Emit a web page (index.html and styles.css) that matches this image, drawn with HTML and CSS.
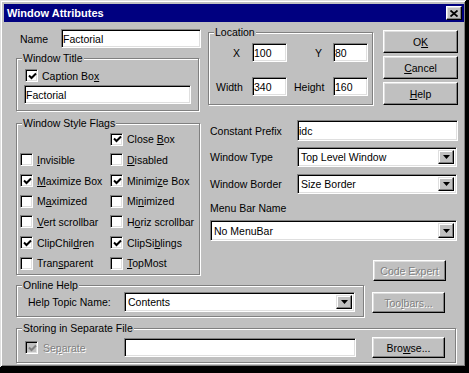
FILE: index.html
```html
<!DOCTYPE html>
<html lang="en">

<head>
    <meta charset="UTF-8">
    <meta name="viewport" content="width=device-width, initial-scale=1.0">
    <title>Window Attributes</title>
    <link rel="stylesheet" href="styles.css">
</head>

<body>
    <div class="dialog">
        <div class="titlebar">
            <span class="title">Window Attributes</span>
            <span class="close">
                <svg width="8" height="7" viewBox="0 0 8 7"><path d="M0.5 0.5L7.5 6.5M7.5 0.5L0.5 6.5" stroke="#000" stroke-width="1.8" fill="none"/></svg>
            </span>
        </div>

        <div class="content">
            <div class="top">
                <div class="col-left">
                    <div class="name-row">
                        <span class="name-label">Name</span>
                        <input class="edit name-edit" type="text" value="Factorial" readonly>
                    </div>

                    <div class="group title-group">
                        <span class="legend">Window Title</span>
                        <div class="check-row caption-row">
                            <span class="check on"><svg width="9" height="9" viewBox="0 0 9 9"><path d="M1 3.5L3.5 6L8 1.5" stroke="#000" stroke-width="2" fill="none"/></svg></span>
                            <span>Caption Bo<u>x</u></span>
                        </div>
                        <input class="edit title-edit" type="text" value="Factorial" readonly>
                    </div>

                    <div class="group flags-group">
                        <span class="legend">Window Style Flags</span>
                        <div class="flags">
                            <span></span>
                            <div class="check-row"><span class="check on"><svg width="9" height="9" viewBox="0 0 9 9"><path d="M1 3.5L3.5 6L8 1.5" stroke="#000" stroke-width="2" fill="none"/></svg></span><span>Close <u>B</u>ox</span></div>
                            <div class="check-row"><span class="check"></span><span><u>I</u>nvisible</span></div>
                            <div class="check-row"><span class="check"></span><span><u>D</u>isabled</span></div>
                            <div class="check-row"><span class="check on"><svg width="9" height="9" viewBox="0 0 9 9"><path d="M1 3.5L3.5 6L8 1.5" stroke="#000" stroke-width="2" fill="none"/></svg></span><span><u>M</u>aximize Box</span></div>
                            <div class="check-row"><span class="check on"><svg width="9" height="9" viewBox="0 0 9 9"><path d="M1 3.5L3.5 6L8 1.5" stroke="#000" stroke-width="2" fill="none"/></svg></span><span>Minimi<u>z</u>e Box</span></div>
                            <div class="check-row"><span class="check"></span><span>M<u>a</u>ximized</span></div>
                            <div class="check-row"><span class="check"></span><span>Mi<u>n</u>imized</span></div>
                            <div class="check-row"><span class="check"></span><span><u>V</u>ert scrollbar</span></div>
                            <div class="check-row"><span class="check"></span><span>H<u>o</u>riz scrollbar</span></div>
                            <div class="check-row"><span class="check on"><svg width="9" height="9" viewBox="0 0 9 9"><path d="M1 3.5L3.5 6L8 1.5" stroke="#000" stroke-width="2" fill="none"/></svg></span><span>ClipChil<u>d</u>ren</span></div>
                            <div class="check-row"><span class="check on"><svg width="9" height="9" viewBox="0 0 9 9"><path d="M1 3.5L3.5 6L8 1.5" stroke="#000" stroke-width="2" fill="none"/></svg></span><span>ClipSi<u>b</u>lings</span></div>
                            <div class="check-row"><span class="check"></span><span>Tran<u>s</u>parent</span></div>
                            <div class="check-row"><span class="check"></span><span><u>T</u>opMost</span></div>
                        </div>
                    </div>
                </div>

                <div class="col-right">
                    <div class="loc-row">
                        <div class="group location">
                            <span class="legend">Location</span>
                            <div class="loc-grid">
                                <span class="lbl-x">X</span>
                                <input class="edit" type="text" value="100" readonly>
                                <span class="lbl-y">Y</span>
                                <input class="edit" type="text" value="80" readonly>
                                <span class="lbl-w">Width</span>
                                <input class="edit" type="text" value="340" readonly>
                                <span class="lbl-h">Height</span>
                                <input class="edit" type="text" value="160" readonly>
                            </div>
                        </div>
                        <div class="btn-stack">
                            <button class="btn">O<u>K</u></button>
                            <button class="btn"><u>C</u>ancel</button>
                            <button class="btn"><u>H</u>elp</button>
                        </div>
                    </div>

                    <div class="field-row cp-row">
                        <span class="field-label">Constant Prefix</span>
                        <input class="edit field-edit" type="text" value="idc" readonly>
                    </div>
                    <div class="field-row wt-row">
                        <span class="field-label">Window Type</span>
                        <div class="combo field-combo"><span class="combo-text">Top Level Window</span><span class="drop"><svg width="7" height="4" viewBox="0 0 7 4"><path d="M0 0H7L3.5 4Z"/></svg></span></div>
                    </div>
                    <div class="field-row wb-row">
                        <span class="field-label">Window Border</span>
                        <div class="combo field-combo"><span class="combo-text">Size Border</span><span class="drop"><svg width="7" height="4" viewBox="0 0 7 4"><path d="M0 0H7L3.5 4Z"/></svg></span></div>
                    </div>
                    <div class="menu-label">Menu Bar Name</div>
                    <div class="combo menu-combo"><span class="combo-text">No MenuBar</span><span class="drop"><svg width="7" height="4" viewBox="0 0 7 4"><path d="M0 0H7L3.5 4Z"/></svg></span></div>
                    <button class="btn small code-btn" disabled>Code Expert</button>
                </div>
            </div>

            <div class="help-row">
                <div class="group help-group">
                    <span class="legend">Online Help</span>
                    <div class="help-line">
                        <span class="help-label">Help Topic Name:</span>
                        <div class="combo help-combo"><span class="combo-text">Contents</span><span class="drop"><svg width="7" height="4" viewBox="0 0 7 4"><path d="M0 0H7L3.5 4Z"/></svg></span></div>
                    </div>
                </div>
                <button class="btn small toolbars-btn" disabled>Too<u>l</u>bars...</button>
            </div>

            <div class="group store-group">
                <span class="legend">Storing in Separate File</span>
                <div class="store-line">
                    <div class="check-row sep-check disabled">
                        <span class="check on"><svg width="9" height="9" viewBox="0 0 9 9"><path d="M1 3.5L3.5 6L8 1.5" stroke="#808080" stroke-width="2" fill="none"/></svg></span>
                        <span>Se<u>p</u>arate</span>
                    </div>
                    <input class="edit store-edit" type="text" value="" readonly>
                    <button class="btn small browse-btn">Bro<u>w</u>se...</button>
                </div>
            </div>
        </div>
    </div>
</body>

</html>
```

FILE: styles.css
```css
* {
    box-sizing: border-box;
}

body {
    margin: 0;
    background: #000;
    font-family: "Liberation Sans", Arial, sans-serif;
    font-size: 10.5px;
    color: #000;
}

.dialog {
    width: 466px;
    height: 367px;
    padding: 4px 0 0 4px;
    background: #c0c0c0;
    box-shadow: inset 1px 1px 0 #dfdfdf, inset -1px -1px 0 #000, inset 2px 2px 0 #fff, inset -2px -2px 0 #808080;
}

.titlebar {
    display: flex;
    align-items: center;
    justify-content: space-between;
    width: 460px;
    height: 18px;
    padding: 0 2px 0 3px;
    background: #000080;
}

.title {
    color: #fff;
    font-weight: bold;
    font-size: 11px;
}

.close {
    display: flex;
    align-items: center;
    justify-content: center;
    width: 16px;
    height: 14px;
    background: #c0c0c0;
    border: 1px solid;
    border-color: #fff #000 #000 #fff;
    box-shadow: inset -1px -1px 0 #808080, inset 1px 1px 0 #dfdfdf;
}

.content {
    padding-left: 12px;
}

.top {
    display: flex;
    align-items: flex-start;
}

.col-left {
    width: 185px;
}

.col-right {
    width: 250px;
    margin-left: 7px;
}

/* inputs */
.edit {
    display: block;
    height: 19px;
    margin: 0;
    padding: 0 1px;
    font-family: inherit;
    font-size: 10.5px;
    color: #000;
    background: #fff;
    border: 1px solid;
    border-color: #808080 #fff #fff #808080;
    box-shadow: inset 1px 1px 0 #000, inset -1px -1px 0 #dfdfdf;
    outline: none;
}

.combo {
    display: flex;
    align-items: center;
    height: 20px;
    padding: 2px;
    background: #fff;
    border: 1px solid;
    border-color: #808080 #fff #fff #808080;
    box-shadow: inset 1px 1px 0 #000, inset -1px -1px 0 #dfdfdf;
}

.combo-text {
    flex: 1;
    padding-left: 1px;
}

.drop {
    display: flex;
    align-items: center;
    justify-content: center;
    width: 16px;
    height: 100%;
    background: #c0c0c0;
    border: 1px solid;
    border-color: #dfdfdf #000 #000 #dfdfdf;
    box-shadow: inset -1px -1px 0 #808080, inset 1px 1px 0 #fff;
}

/* group boxes */
.group {
    border: 1px solid #808080;
    box-shadow: 1px 1px 0 #fff, inset 1px 1px 0 #fff;
}

.legend {
    display: block;
    width: fit-content;
    margin: -7px 0 0 5px;
    padding: 0 1px;
    line-height: 13px;
    background: #c0c0c0;
}

/* checkboxes */
.check-row {
    display: flex;
    align-items: center;
    gap: 4px;
}

.check {
    display: flex;
    align-items: center;
    justify-content: center;
    width: 13px;
    height: 13px;
    background: #fff;
    border: 1px solid;
    border-color: #808080 #fff #fff #808080;
    box-shadow: inset 1px 1px 0 #000, inset -1px -1px 0 #dfdfdf;
}

.check svg {
    margin: 1px 0 0 1px;
}

.disabled {
    color: #808080;
    text-shadow: 1px 1px 0 #fff;
}

.disabled .check {
    background: #c0c0c0;
}

/* buttons */
.btn {
    display: flex;
    align-items: center;
    justify-content: center;
    width: 75px;
    height: 23px;
    margin: 0;
    padding: 0;
    font-family: inherit;
    font-size: 10.5px;
    color: #000;
    background: #c0c0c0;
    border: 1px solid;
    border-color: #fff #000 #000 #fff;
    box-shadow: inset -1px -1px 0 #808080, inset 1px 1px 0 #dfdfdf;
}

.btn:disabled {
    color: #808080;
    text-shadow: 1px 1px 0 #fff;
}

.btn.small {
    width: 73px;
    height: 21px;
}

/* left column */
.name-row {
    display: flex;
    align-items: center;
    margin-top: 7px;
}

.name-label {
    width: 45px;
    padding-left: 4px;
}

.name-edit {
    width: 140px;
}

.title-group {
    width: 183px;
    margin-top: 10px;
    padding-bottom: 6px;
}

.caption-row {
    height: 13px;
    margin-top: 4px;
    padding-left: 8px;
}

.title-edit {
    width: 167px;
    margin: 3px 0 0 7px;
}

.flags-group {
    width: 184px;
    margin-top: 12px;
}

.flags {
    display: grid;
    grid-template-columns: 90px 1fr;
    grid-auto-rows: 20.67px;
    margin-top: -1px;
    padding-left: 3px;
}

/* right column */
.loc-row {
    display: flex;
    align-items: flex-start;
}

.location {
    width: 165px;
    margin-top: 10px;
    padding-bottom: 8px;
}

.loc-grid {
    display: grid;
    grid-template-columns: 43px 35px 46px 35px;
    grid-auto-rows: 19px;
    row-gap: 15px;
    align-items: center;
    margin-top: 4px;
}

.lbl-x {
    padding-left: 24px;
}

.lbl-y {
    padding-left: 28px;
}

.lbl-w,
.lbl-h {
    padding-left: 7px;
}

.btn-stack {
    display: flex;
    flex-direction: column;
    gap: 3px;
    margin: 8px 0 0 10px;
}

.field-row {
    display: flex;
    align-items: center;
}

.field-label {
    width: 89px;
    padding-left: 2px;
}

.field-edit {
    width: 161px;
    height: 21px;
}

.field-combo {
    width: 160px;
}

.cp-row {
    margin-top: 15px;
}

.wt-row {
    margin-top: 6px;
}

.wb-row {
    margin-top: 7px;
}

.menu-label {
    margin-top: 8px;
    padding-left: 2px;
    line-height: 13px;
}

.menu-combo {
    width: 247px;
    height: 21px;
    margin: 5px 0 0 2px;
}

.code-btn {
    margin: 19px 0 0 165px;
}

/* bottom groups */
.help-row {
    display: flex;
    align-items: flex-start;
    margin-top: 4px;
}

.help-group {
    width: 348px;
    padding-bottom: 4px;
}

.help-line {
    display: flex;
    align-items: center;
}

.help-label {
    width: 107px;
    padding-left: 11px;
}

.help-combo {
    width: 231px;
}

.toolbars-btn {
    margin: 7px 0 0 8px;
}

.store-group {
    width: 440px;
    margin-top: 11px;
    padding-bottom: 4px;
}

.store-line {
    display: flex;
    align-items: center;
    margin-top: 2px;
    height: 21px;
}

.sep-check {
    width: 107px;
    padding-left: 8px;
    gap: 5px;
}

.store-edit {
    width: 232px;
}

.browse-btn {
    margin-left: 16px;
}
```
